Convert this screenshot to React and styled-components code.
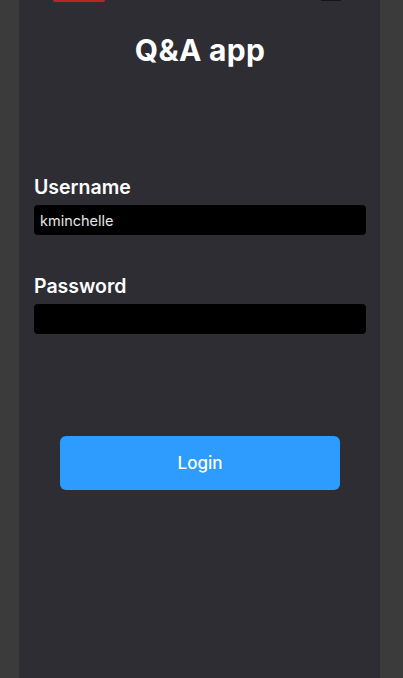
import React, { useState } from 'react';
import styled, { createGlobalStyle } from 'styled-components';

const GlobalStyle = createGlobalStyle`
    html, body {
        margin: 0;
        padding: 0;
        background: #3b3b3c;
        font-family: "Inter", "Liberation Sans", Arial, sans-serif;
    }
`

const App = () => {
    const [username, setUsername] = useState('kminchelle');
    const [password, setPassword] = useState('');

    return (
        <>
            <GlobalStyle />
            <Page>
                <Phone>
                    {/* 상단 잘린 상태바 */}
                    <TopStrip>
                        <RedPill />
                        <DarkPill />
                    </TopStrip>

                    <Title>Q&amp;A app</Title>

                    <Form>
                        <Field>
                            <Label>Username</Label>
                            <Input value={username} onChange={(e) => setUsername(e.target.value)} />
                        </Field>
                        <Field>
                            <Label>Password</Label>
                            <Input type="password" value={password} onChange={(e) => setPassword(e.target.value)} />
                        </Field>
                    </Form>

                    <ButtonWrap>
                        <LoginButton>Login</LoginButton>
                    </ButtonWrap>
                </Phone>
            </Page>
        </>
    )
};

export default App;

const Page = styled.div`
    width: 403px;
    height: 678px;
    padding: 0 23px 0 19px;
    box-sizing: border-box;
    overflow: hidden;
`
const Phone = styled.div`
    height: 100%;
    background: #2d2d33;
    display: flex;
    flex-direction: column;
    padding: 0 14px 0 15px;
`

// ----- 상단
const TopStrip = styled.div`
    height: 3px;
    display: flex;
    justify-content: space-between;
    padding: 0 25px 0 19px;
`
const RedPill = styled.div`
    width: 52px;
    height: 2px;
    background: #b8262b;
    border-radius: 0 0 3px 3px;
`
const DarkPill = styled.div`
    width: 20px;
    height: 1px;
    background: #15151a;
`

const Title = styled.h1`
    margin: 29px 0 0;
    text-align: center;
    color: #ffffff;
    font-size: 30px;
    font-weight: 700;
    line-height: 36px;
    letter-spacing: 0.3px;
`

// ----- 입력 영역
const Form = styled.div`
    margin-top: 108px;
    display: flex;
    flex-direction: column;
    gap: 40px;
`
const Field = styled.div`
    display: flex;
    flex-direction: column;
    gap: 7px;
`
const Label = styled.label`
    color: #ffffff;
    font-size: 19.5px;
    font-weight: 600;
    line-height: 22px;
`
const Input = styled.input`
    height: 30px;
    box-sizing: border-box;
    background: #000000;
    border: none;
    border-radius: 4px;
    padding: 0 6px;
    color: #e6e6e6;
    font-family: "Inter", "Liberation Sans", Arial, sans-serif;
    font-size: 14.5px;
    outline: none;
`

// ----- 버튼
const ButtonWrap = styled.div`
    margin-top: 102px;
    padding: 0 26px;
`
const LoginButton = styled.button`
    width: 100%;
    height: 54px;
    border: none;
    border-radius: 6px;
    background: #2e9bfe;
    color: #ffffff;
    font-family: "Inter", "Liberation Sans", Arial, sans-serif;
    font-size: 17px;
    font-weight: 500;
`
